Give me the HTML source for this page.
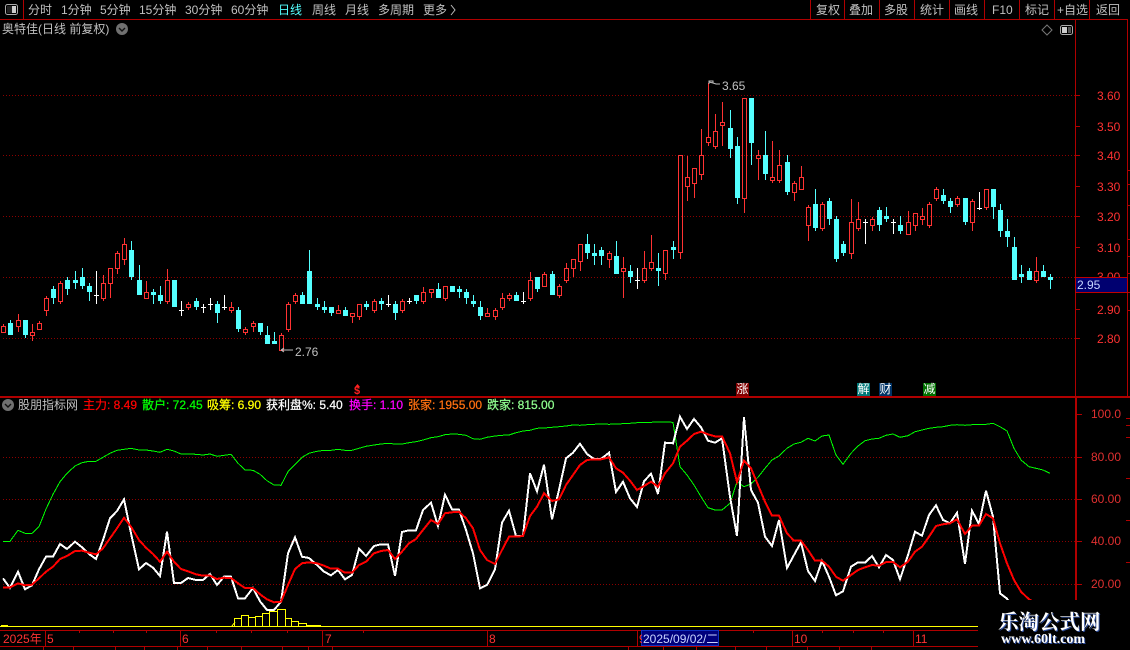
<!DOCTYPE html>
<html><head><meta charset="utf-8"><title>奥特佳</title>
<style>
html,body{margin:0;padding:0;background:#000;width:1130px;height:650px;overflow:hidden}
body{position:relative;font:12px/14px "Liberation Sans","WenQuanYi Zen Hei","Noto Sans CJK SC",sans-serif;color:#c0c0c0}
svg{position:absolute;left:0;top:0}
.t{position:absolute;white-space:pre;line-height:14px;height:14px}
.r{color:#ff3232}
.b{-webkit-text-stroke:.25px currentColor}
.tag{position:absolute;width:13px;height:13px;top:383px;color:#fff;font-size:12px;line-height:13px;text-align:center}
#wm{position:absolute;left:978px;top:600px;width:152px;height:50px;background:#000}
</style></head><body>
<svg id="c" width="1130" height="650" viewBox="0 0 1130 650"></svg>
<div id="wm"></div>
<svg width="1130" height="650" viewBox="0 0 1130 650" shape-rendering="crispEdges">
<g fill="#b00000">
<rect x="0" y="19" width="1127" height="1"/>
<rect x="23" y="0" width="1" height="19"/>
<rect x="810" y="0" width="1" height="19"/><rect x="844" y="0" width="1" height="19"/><rect x="879" y="0" width="1" height="19"/><rect x="914" y="0" width="1" height="19"/><rect x="949" y="0" width="1" height="19"/><rect x="984" y="0" width="1" height="19"/><rect x="1019" y="0" width="1" height="19"/><rect x="1054" y="0" width="1" height="19"/><rect x="1089" y="0" width="1" height="19"/>
<rect x="1075" y="19" width="1" height="377"/>
<rect x="1075" y="397" width="2" height="203"/>
<rect x="1127" y="19" width="1" height="377"/>
<rect x="0" y="396" width="1130" height="2"/>
<rect x="1075" y="95" width="5" height="1"/><rect x="1075" y="126" width="5" height="1"/><rect x="1075" y="155" width="5" height="1"/><rect x="1075" y="186" width="5" height="1"/><rect x="1075" y="216" width="5" height="1"/><rect x="1075" y="247" width="5" height="1"/><rect x="1075" y="309" width="5" height="1"/><rect x="1075" y="338" width="5" height="1"/>
<rect x="1077" y="414" width="5" height="1"/><rect x="1077" y="457" width="5" height="1"/><rect x="1077" y="499" width="5" height="1"/><rect x="1077" y="541" width="5" height="1"/><rect x="1077" y="584" width="5" height="1"/>
<rect x="1127" y="170" width="3" height="1"/><rect x="1127" y="184" width="3" height="1"/><rect x="1127" y="205" width="3" height="1"/><rect x="1127" y="239" width="3" height="1"/><rect x="1127" y="256" width="3" height="1"/><rect x="1127" y="273" width="3" height="1"/><rect x="1127" y="292" width="3" height="1"/><rect x="1127" y="310" width="3" height="1"/>
<rect x="1126" y="418" width="4" height="1"/><rect x="1126" y="425" width="4" height="1"/><rect x="1126" y="437" width="4" height="1"/><rect x="1126" y="478" width="4" height="1"/><rect x="1126" y="520" width="4" height="1"/><rect x="1126" y="562" width="4" height="1"/>
<rect x="0" y="630" width="978" height="1"/>
<rect x="0" y="646" width="978" height="1"/>
<rect x="45" y="630" width="1" height="16"/><rect x="180" y="630" width="1" height="16"/><rect x="322" y="630" width="1" height="16"/><rect x="487" y="630" width="1" height="16"/><rect x="637" y="630" width="1" height="16"/><rect x="792" y="630" width="1" height="16"/><rect x="913" y="630" width="1" height="16"/>
<rect x="79" y="631" width="1" height="2"/><rect x="113" y="631" width="1" height="2"/><rect x="146" y="631" width="1" height="2"/><rect x="216" y="631" width="1" height="2"/><rect x="251" y="631" width="1" height="2"/><rect x="287" y="631" width="1" height="2"/><rect x="363" y="631" width="1" height="2"/><rect x="753" y="631" width="1" height="2"/><rect x="822" y="631" width="1" height="2"/><rect x="853" y="631" width="1" height="2"/><rect x="883" y="631" width="1" height="2"/>
<rect x="43" y="647" width="1" height="3"/><rect x="73" y="647" width="1" height="3"/><rect x="115" y="647" width="1" height="3"/><rect x="144" y="647" width="1" height="3"/><rect x="177" y="647" width="1" height="3"/><rect x="207" y="647" width="1" height="3"/><rect x="241" y="647" width="1" height="3"/><rect x="282" y="647" width="1" height="3"/><rect x="308" y="647" width="1" height="3"/><rect x="332" y="647" width="1" height="3"/><rect x="628" y="647" width="1" height="3"/><rect x="663" y="647" width="1" height="3"/><rect x="696" y="647" width="1" height="3"/><rect x="735" y="647" width="1" height="3"/><rect x="766" y="647" width="1" height="3"/><rect x="807" y="647" width="1" height="3"/><rect x="839" y="647" width="1" height="3"/><rect x="871" y="647" width="1" height="3"/>
</g>
<rect x="641.5" y="630.5" width="77" height="15" fill="#00007c" stroke="#1030c0"/>
<rect x="1075.5" y="277.5" width="52" height="15" fill="#000070" stroke="#c00000"/>
</svg>
<svg width="1130" height="40" viewBox="0 0 1130 40" style="height:40px">
<rect x="5.500" y="4.500" width="12" height="10" rx="2" fill="none" stroke="#aaa"/><rect x="7" y="6" width="5" height="7" fill="#222"/><rect x="12" y="6" width="4" height="7" fill="#ccc"/>
<circle cx="122" cy="29" r="6" fill="#707070"/><path d="M119 28l3 3 3-3" fill="none" stroke="#111" stroke-width="1.4"/>
<path d="M1047 25l5 5-5 5-5-5z" fill="none" stroke="#777"/>
<rect x="1060.500" y="25.500" width="12" height="9" rx="2" fill="none" stroke="#aaa"/><rect x="1062" y="27" width="5" height="6" fill="#ccc"/><rect x="1068" y="27" width="3" height="6" fill="#555"/>
<path d="M451 5l4 5-4 5" fill="none" stroke="#bbb"/>
</svg>
<svg width="1130" height="650" viewBox="0 0 1130 650" fill="none" stroke="#c0c0c0">
<path d="M709 84V81h4v2M709 82l4 1 3 1h4"/>
<path d="M281 350h12M281 350l3-2M281 350l3 2"/>
<circle cx="8" cy="405" r="6" fill="#707070" stroke="none"/><path d="M5 404l3 3 3-3" stroke="#111" stroke-width="1.4"/>
<path d="M355 387h5l-2.500-3z" fill="#ff2020" stroke="none"/>
</svg>

<span class="t" style="left:28px;top:3px">分时</span><span class="t" style="left:61px;top:3px">1分钟</span><span class="t" style="left:100px;top:3px">5分钟</span><span class="t" style="left:139px;top:3px">15分钟</span><span class="t" style="left:185px;top:3px">30分钟</span><span class="t" style="left:231px;top:3px">60分钟</span><span class="t" style="left:278px;top:3px;color:#54ffff">日线</span><span class="t" style="left:312px;top:3px">周线</span><span class="t" style="left:345px;top:3px">月线</span><span class="t" style="left:378px;top:3px">多周期</span><span class="t" style="left:423px;top:3px">更多</span>
<span class="t" style="left:816px;top:3px">复权</span><span class="t" style="left:849px;top:3px">叠加</span><span class="t" style="left:884px;top:3px">多股</span><span class="t" style="left:920px;top:3px">统计</span><span class="t" style="left:954px;top:3px">画线</span><span class="t" style="left:992px;top:3px">F10</span><span class="t" style="left:1025px;top:3px">标记</span><span class="t" style="left:1057px;top:3px">+自选</span><span class="t" style="left:1096px;top:3px">返回</span>
<span class="t" style="left:2px;top:22px">奥特佳(日线 前复权)</span>

<span class="t r" style="left:1097px;top:89px">3.60</span><span class="t r" style="left:1097px;top:120px">3.50</span><span class="t r" style="left:1097px;top:149px">3.40</span><span class="t r" style="left:1097px;top:180px">3.30</span><span class="t r" style="left:1097px;top:210px">3.20</span><span class="t r" style="left:1097px;top:241px">3.10</span><span class="t r" style="left:1097px;top:270px;height:7px;overflow:hidden">3.00</span><span class="t r" style="left:1097px;top:303px">2.90</span><span class="t r" style="left:1097px;top:332px">2.80</span>
<span class="t" style="left:1077px;top:278px;color:#c8d4ff">2.95</span>
<span class="t" style="left:722px;top:79px">3.65</span><span class="t" style="left:295px;top:345px">2.76</span>
<span class="t" style="left:1091px;top:407px;color:#e03030">100.0</span><span class="t" style="left:1091px;top:450px;color:#e03030">80.00</span><span class="t" style="left:1091px;top:492px;color:#e03030">60.00</span><span class="t" style="left:1091px;top:534px;color:#e03030">40.00</span><span class="t" style="left:1091px;top:577px;color:#e03030">20.00</span>

<span class="t" style="left:354px;top:384px;color:#ff2020;font-weight:bold;font-size:11px">$</span>
<div class="tag" style="left:736px;background:#800000">涨</div><div class="tag" style="left:857px;background:#007878">解</div><div class="tag" style="left:879px;background:#003366">财</div><div class="tag" style="left:923px;background:#007000">减</div>

<span class="t" style="left:18px;top:398px">股朋指标网</span>
<span class="t b" style="left:83px;top:398px;color:#ff0000">主力: 8.49</span>
<span class="t b" style="left:142px;top:398px;color:#00ff00">散户: 72.45</span>
<span class="t b" style="left:207px;top:398px;color:#ffff00">吸筹: 6.90</span>
<span class="t b" style="left:266px;top:398px;color:#ffffff">获利盘%: 5.40</span>
<span class="t b" style="left:349px;top:398px;color:#ff00ff">换手: 1.10</span>
<span class="t b" style="left:408px;top:398px;color:#ff7010">张家: 1955.00</span>
<span class="t b" style="left:487px;top:398px;color:#90ff90">跌家: 815.00</span>

<span class="t" style="left:3px;top:632px;color:#ff3232">2025年</span><span class="t" style="left:47px;top:632px;color:#ff3232">5</span><span class="t" style="left:182px;top:632px;color:#ff3232">6</span><span class="t" style="left:325px;top:632px;color:#ff3232">7</span><span class="t" style="left:489px;top:632px;color:#ff3232">8</span><span class="t" style="left:639px;top:632px;color:#ff3232;width:3px;overflow:hidden">9</span><span class="t" style="left:643px;top:632px;color:#c8d4ff">2025/09/02/二</span><span class="t" style="left:794px;top:632px;color:#ff3232">10</span><span class="t" style="left:915px;top:632px;color:#ff3232">11</span>

<span class="t" style="left:998px;top:608px;height:24px;font:bold 20.500px/24px 'Noto Serif CJK SC','Noto Sans CJK SC',serif;color:#fff;text-shadow:1px 1px 0 #3050a0">乐淘公式网</span>
<span class="t" style="left:1001px;top:632px;height:16px;font:bold 14px/16px 'Liberation Serif',serif;color:#fff;text-shadow:1px 1px 0 #3050a0">www.60lt.com</span>

<script>
var X=function(i){return Math.round(3.3+7.12*i)};
var S=[[220,"r 319 338 312 338;c 309 345 300 345;r 301 320 282 336;c 300 345 300 353;r 337 347 312 362;r 310 329 304 329;r 235 272 228 288;c 207 234 198 252;r 190 245 183 252;c 180 207 171 225;c 180 189 153 207;c 171 198 144 207;c 198 216 190 243;w 226 226 153 252;r 190 236 165 243;r 145 191 145 234;r 100 146 93 162;r 73 119 54 135;c 90 171 63 180;c 180 225 135 225;r 217 236 183 236;c 216 225 207 252;c 225 243 198 252;r 181 245 147 252;c 180 261 180 261;w 271 271 243 288;r 253 263 246 270;c 243 261 234 270;w 261 261 252 279;w 253 253 234 270;c 252 279 243 309;w 262 262 225 270;r 262 272 246 279;c 270 327 261 336;r 328 338 321 345;r 310 320 304 336;c 309 336 309 345;c 345 372 318 372;c 363 372 336 372;r 346 392 339 392;r 253 329 246 336;r 226 245 219 252;c 225 252 216 252;c 153 252 90 252;c 252 261 234 270;c 261 270 243 279;c 261 279 261 288;r 271 281 255 281;c 270 288 261 288;r 280 290 280 309;r 253 290 253 300;c 252 261 243 270;r 244 272 237 279;c 243 252 234 270;w 253 253 225 261;c 252 279 243 300;r 244 272 237 279;w 243 243 234 252;c 225 243 225 252;r 217 245 201 252;r 208 218 208 234;c 207 234 189 234;r 199 236 199 243;c 198 216 198 216;c 207 216 198 234;c 216 234 207 252;c 243 252 225 261;c 261 288 243 300;r 280 290 264 290;r 271 290 264 300;r 235 263 219 270;r 226 236 219 243;c 225 243 216 243;w 243 243 216 252;r 181 236 156 243;c 171 207 171 216;r 163 200 156 200;c 162 225 153 225;r 199 227 192 234;r 145 182 129 189;r 118 146 118 171;r 73 127 73 153;c 72 99 42 117;c 99 108 72 135;c 90 108 81 135;r 100 119 93 144;c 108 162 63 162;r 145 155 111 234;c 153 171 135 189;w 181 181 144 207;r 145 182 93 189;r 127 146 45 153;c 144 153 99 198"],
[70,"r 541 613 541 630;c 531 540 513 567;r 256 550 256 567;r 322 350 258 393;r 295 341 295 384;r 256 314 177 330;r 202 220 40 228;r 184 230 132 237;r 157 167 96 228;c 174 237 120 264;c 228 384 201 402;r 85 386 85 429;c 84 219 84 285;r 256 266 240 330;c 255 312 183 330;r 322 332 213 339;r 286 332 240 339;c 276 366 255 375;r 340 368 333 393;r 322 359 288 359;r 412 467 405 513;c 402 474 357 483;r 403 476 396 483;c 393 447 384 465;c 447 567 438 576;c 522 549 513 558;r 457 551 387 567"],
[170,"r 148 176 96 183;w 157 157 147 222;r 148 167 141 183;c 120 165 111 183;c 138 147 111 156;w 156 156 147 192;c 165 183 138 192;r 157 194 123 194;r 130 167 130 183;r 139 149 114 165;r 103 167 96 174;r 58 86 52 93;c 75 93 57 102;c 93 111 84 129;r 85 104 78 111;c 84 156 84 165;r 94 158 87 183;w 114 114 66 120;r 58 113 58 120;c 57 111 57 147;c 120 183 102 201;c 183 201 147 231;c 231 330 201 330;c 312 321 285 339;c 303 330 294 330;r 304 332 261 339;c 303 321 285 321;c 321 330 312 357"]];
var o='';
function R(x,y,w,h,f){return '<rect x="'+x+'" y="'+y+'" width="'+w+'" height="'+h+'" fill="'+f+'"/>'}
var gy=[95,155,216,277,338,457,499,541,584],g='';
gy.forEach(function(y){g+='<path d="M3 '+(y+.5)+'H1075" stroke="#8c0000" stroke-dasharray="1 2" fill="none"/>'});
o+=g;
var i=0,k=function(v,y0){return Math.round(y0+v/3)};
S.forEach(function(s){
 s[1].split(';').forEach(function(c){
  var p=c.split(' '),t=p[0],y0=s[0],a=k(+p[1],y0),b=k(+p[2],y0),u=k(+p[3],y0),d=k(+p[4],y0),x=X(i);
  if(t=='c'){o+=R(x,u,1,Math.max(d-u,1),'#54ffff')+R(x-2,a,5,Math.max(b-a,1),'#54ffff')}
  else if(t=='w'){o+=R(x,u,1,Math.max(d-u,1),'#fff')+R(x-2,a,5,1,'#fff')}
  else{
   if(u<a)o+=R(x,u,1,a-u,'#ff3232');
   if(d>b)o+=R(x,b,1,d-b,'#ff3232');
   o+='<rect x="'+(x-1.5)+'" y="'+(a+.5)+'" width="4" height="'+Math.max(b-a-1,2)+'" fill="none" stroke="#ff3232"/>';
  }
  i++;
 });
});
var B=[[234,241,618],[241,248,615],[248,255,617],[255,262,616],[262,269,613],[269,277,611],[277,285,609],[285,291,618],[291,298,621],[298,306,623],[306,320,625]];
B.forEach(function(b){o+='<rect x="'+(b[0]+.5)+'" y="'+(b[2]+.5)+'" width="'+(b[1]-b[0])+'" height="'+(626-b[2])+'" fill="none" stroke="#ffff00"/>'});
o+='<path d="M232 626l3-4" stroke="#ffff00" fill="none"/>'+R(0,626,978,1,'#ffff00')+R(1,625,7,1,'#ffff00');
function L(a,b,off,st){return a.map(function(v,j){return X(st+j)+','+(off+v/3).toFixed(1)}).join(' ')}
var gA=[394,394,361,370,370,350,297,253,215,190,168,158,154,154,142,130,121,118,115,120,120,123,127,118,123,132,132,133,135,132,139,136,133,160,180,181,193,212,225,226,185,163,142,130,124,121,121,118,121,121,115,109];
var gB=[105,102,100,102,102,98,95,90,83,80,74,72,73,76,86,88,82,78,76,75,68,63,61,55,54,52,50,48,45,46,44,43,42,43,42,41,40,38,37,37,36,36,37,170,195,225,260,293,300,300,280,215];
var gC=[350,342,322,295,270,258,235,222,217,205,213,198,195,255,283,250,228,212,207,205,196,192,202,197,185,180,175,172,170,166,164,166,164,163,163,160,170,183,235,270,290,295,300,310];
var wA=[505,534,485,538,526,478,440,440,402,417,395,412,432,447,390,325,303,268,370,478,459,473,498,365,519,519,504,510,510,492,525,500,500,565,565,534,574,600,600,575,430,382,440,444,465,485,496,480,508,495,416,438];
var wB=[408,403,403,498,366,361,361,300,278,348,254,298,299,360,430,535,525,478,338,302,378,378,190,244,164,328,240,145,128,101,132,147,147,128,246,215,265,291,214,191,252,98,100,20,57,27,52,92,98,85,260,378];
var wC=[142,360,398,500,528,450,594,555,517,603,633,572,620,676,664,590,577,578,558,592,555,570,628,555,485,497,435,406,450,460,428,582,422,462,362,440,670,686,720];
var rA=[532,532,520,526,524,505,485,470,447,438,423,422,428,433,415,385,355,323,350,390,413,432,455,425,455,477,484,493,497,497,507,503,504,520,534,534,553,568,577,575,525,477,460,457,460,467,476,476,488,488,465,455];
var rB=[430,423,420,447,425,400,387,360,330,342,310,307,305,325,355,420,450,462,420,380,380,378,318,290,250,273,268,225,195,165,150,148,148,142,175,188,212,240,228,215,230,190,160,110,92,72,65,73,79,79,130,216];
var rC=[272,295,345,395,437,437,490,512,512,540,572,572,590,620,632,615,600,592,585,587,576,576,592,575,545,530,500,468,463,460,448,492,467,467,432,445,520,580,630,665,688,700];
function PL(a,b,c,col,w){return '<polyline fill="none" stroke="'+col+'" stroke-width="'+w+'" points="'+L(a,0,410,0)+' '+L(b,0,410,52)+' '+L(c,0,370,104)+'"/>'}
o+=PL(gA,gB,gC,'#00ff00',1)+PL(wA,wB,wC,'#ffffff',2)+PL(rA,rB,rC,'#ff0000',2);
var sv=document.getElementById('c');sv.setAttribute('shape-rendering','crispEdges');sv.innerHTML=o;
</script>
</body></html>
